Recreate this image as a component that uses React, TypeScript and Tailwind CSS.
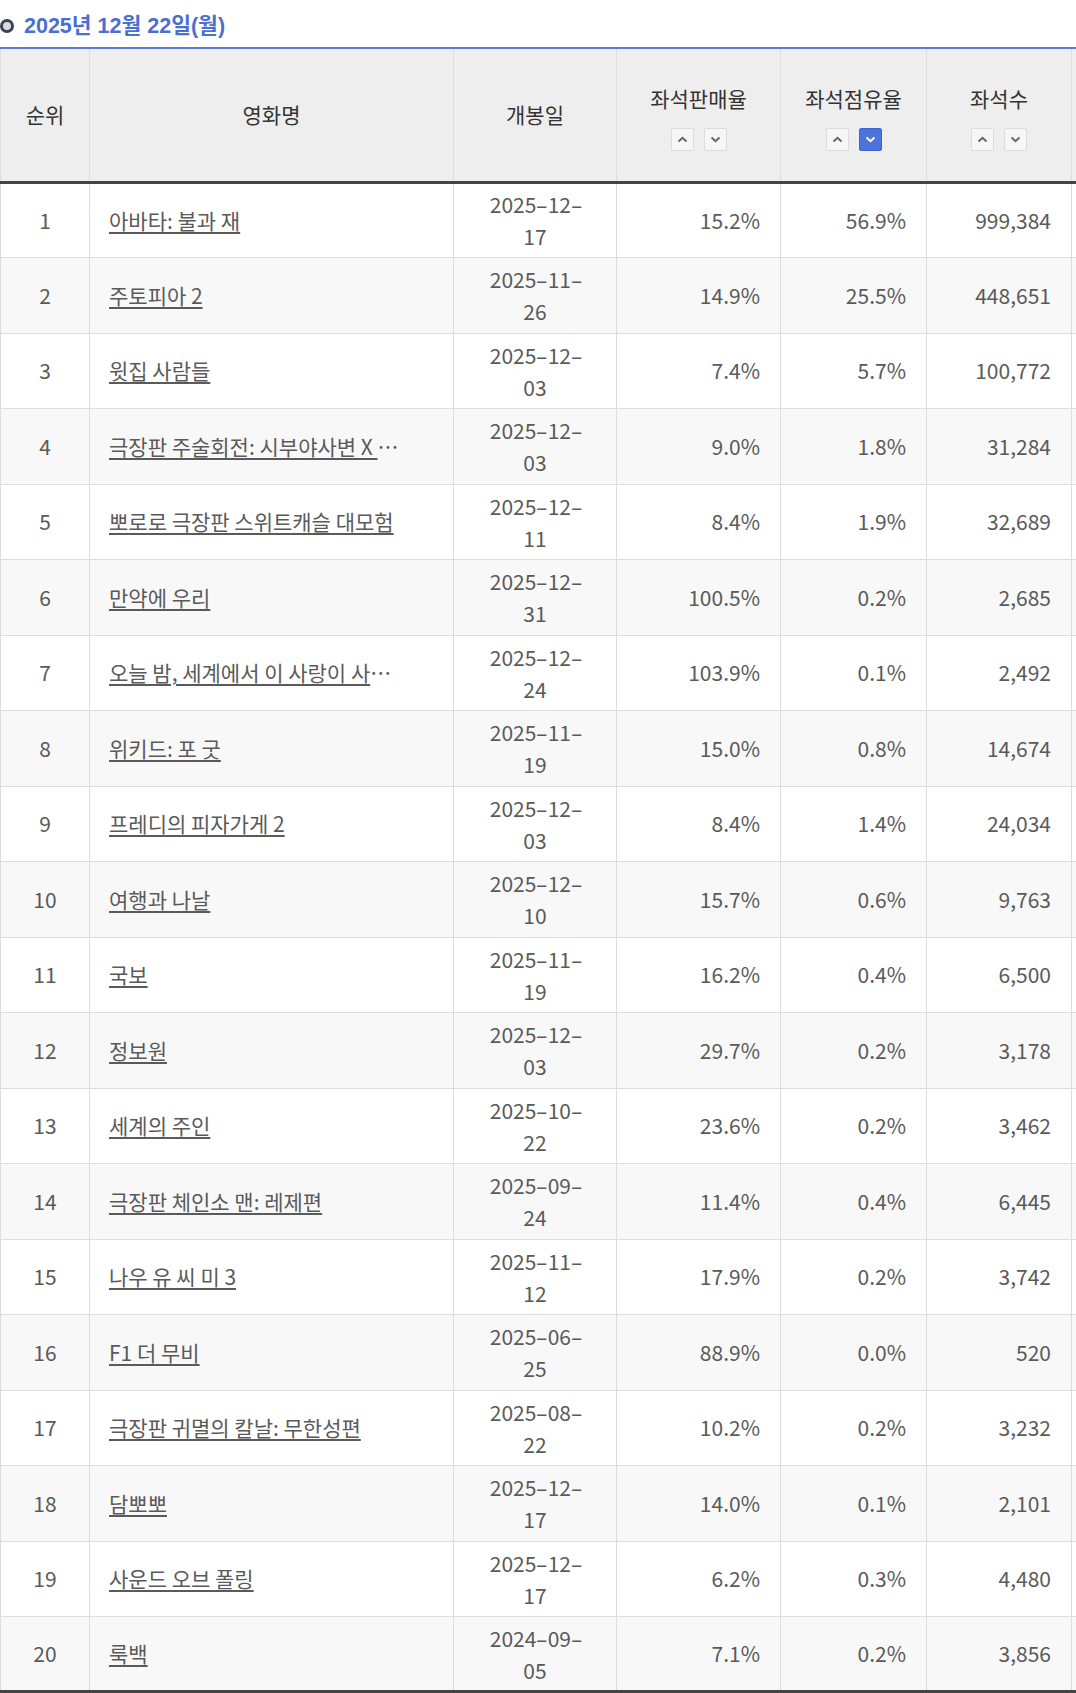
const ROWS: [number, string, string, string, string, string][] = [
  [1, "아바타: 불과 재", "2025-12-17", "15.2%", "56.9%", "999,384"],
  [2, "주토피아 2", "2025-11-26", "14.9%", "25.5%", "448,651"],
  [3, "윗집 사람들", "2025-12-03", "7.4%", "5.7%", "100,772"],
  [4, "극장판 주술회전: 시부야사변 X 사멸회유", "2025-12-03", "9.0%", "1.8%", "31,284"],
  [5, "뽀로로 극장판 스위트캐슬 대모험", "2025-12-11", "8.4%", "1.9%", "32,689"],
  [6, "만약에 우리", "2025-12-31", "100.5%", "0.2%", "2,685"],
  [7, "오늘 밤, 세계에서 이 사랑이 사라진다 해도", "2025-12-24", "103.9%", "0.1%", "2,492"],
  [8, "위키드: 포 굿", "2025-11-19", "15.0%", "0.8%", "14,674"],
  [9, "프레디의 피자가게 2", "2025-12-03", "8.4%", "1.4%", "24,034"],
  [10, "여행과 나날", "2025-12-10", "15.7%", "0.6%", "9,763"],
  [11, "국보", "2025-11-19", "16.2%", "0.4%", "6,500"],
  [12, "정보원", "2025-12-03", "29.7%", "0.2%", "3,178"],
  [13, "세계의 주인", "2025-10-22", "23.6%", "0.2%", "3,462"],
  [14, "극장판 체인소 맨: 레제편", "2025-09-24", "11.4%", "0.4%", "6,445"],
  [15, "나우 유 씨 미 3", "2025-11-12", "17.9%", "0.2%", "3,742"],
  [16, "F1 더 무비", "2025-06-25", "88.9%", "0.0%", "520"],
  [17, "극장판 귀멸의 칼날: 무한성편", "2025-08-22", "10.2%", "0.2%", "3,232"],
  [18, "담뽀뽀", "2025-12-17", "14.0%", "0.1%", "2,101"],
  [19, "사운드 오브 폴링", "2025-12-17", "6.2%", "0.3%", "4,480"],
  [20, "룩백", "2024-09-05", "7.1%", "0.2%", "3,856"],
];

function Chevron({ up, active }: { up?: boolean; active?: boolean }) {
  return (
    <span
      className={`flex h-[23px] w-[23px] items-center justify-center rounded-[2px] border ${
        active ? "border-[#3f66cf] bg-[#4a74db]" : "border-[#dcdcdc] bg-[#f6f6f6]"
      }`}
    >
      <svg width="11" height="7" viewBox="0 0 11 7">
        <path
          d={up ? "M1.5 5.5 L5.5 1.8 L9.5 5.5" : "M1.5 1.5 L5.5 5.2 L9.5 1.5"}
          fill="none"
          stroke={active ? "#ffffff" : "#666666"}
          strokeWidth="2"
        />
      </svg>
    </span>
  );
}

function SortHead({ label, active }: { label: string; active?: boolean }) {
  return (
    <div className="flex flex-col items-center gap-[14px] pt-[4px]">
      <span>{label}</span>
      <div className="flex gap-[10px]">
        <Chevron up />
        <Chevron active={active} />
      </div>
    </div>
  );
}

// "2025-12-17" -> "2025-12-" / "17"; the source font has long hyphens
function DateCell({ date }: { date: string }) {
  const [y, m, d] = date.split("-");
  return (
    <>
      {y}
      <span className="mx-[2px] inline-block scale-x-[1.7]">-</span>
      {m}
      <span className="ml-[2px] inline-block scale-x-[1.7]">-</span>
      <br />
      {d}
    </>
  );
}

export default function App() {
  const cell = "border border-[#dddddd]";
  return (
    <div
      className="w-[1076px] overflow-hidden bg-white text-[21px] text-[#5a5a5a]"
      style={{ fontFamily: '"Noto Sans CJK KR", sans-serif' }}
    >
      <div className="flex h-[47px] items-center gap-[10px] pt-[5px]">
        <span className="h-[14px] w-[14px] shrink-0 rounded-full border-[3.5px] border-[#3d4352] bg-[#d8dbe4]" />
        <span
          className="text-[21.5px] font-bold text-[#4a6fd1]"
          style={{ fontFamily: '"Liberation Sans", "Noto Sans CJK KR", sans-serif' }}
        >
          2025년 12월 22일(월)
        </span>
      </div>
      <table className="w-[1180px] table-fixed border-collapse border-t-2 border-t-[#5a7bd6]">
        <colgroup>
          <col className="w-[89px]" />
          <col className="w-[364px]" />
          <col className="w-[163px]" />
          <col className="w-[164px]" />
          <col className="w-[146px]" />
          <col className="w-[145px]" />
          <col className="w-[109px]" />
        </colgroup>
        <thead>
          <tr className="h-[134px] border-b-[3px] border-b-[#444444] bg-[#eeeeee] text-[#333333]">
            <th className={`${cell} font-normal`}>순위</th>
            <th className={`${cell} font-normal`}>영화명</th>
            <th className={`${cell} font-normal`}>개봉일</th>
            <th className={`${cell} font-normal`}>
              <SortHead label="좌석판매율" />
            </th>
            <th className={`${cell} font-normal`}>
              <SortHead label="좌석점유율" active />
            </th>
            <th className={`${cell} font-normal`}>
              <SortHead label="좌석수" />
            </th>
            <th className={`${cell} font-normal`}>&nbsp;</th>
          </tr>
        </thead>
        <tbody className="border-b-[4px] border-b-[#444444]">
          {ROWS.map(([rank, title, date, sales, share, seats], i) => (
            <tr key={rank} className={`h-[75.5px] ${i % 2 === 1 ? "bg-[#f8f8f8]" : "bg-white"}`}>
              <td className={`${cell} text-center`}>{rank}</td>
              <td className={`${cell} pl-[19px] pr-[54px]`}>
                <div className="truncate underline underline-offset-[3px]">{title}</div>
              </td>
              <td className={`${cell} px-[16px] text-center leading-[32px]`}>
                <DateCell date={date} />
              </td>
              <td className={`${cell} px-[20px] text-right`}>{sales}</td>
              <td className={`${cell} px-[20px] text-right`}>{share}</td>
              <td className={`${cell} px-[20px] text-right`}>{seats}</td>
              <td className={cell}></td>
            </tr>
          ))}
        </tbody>
      </table>
    </div>
  );
}
